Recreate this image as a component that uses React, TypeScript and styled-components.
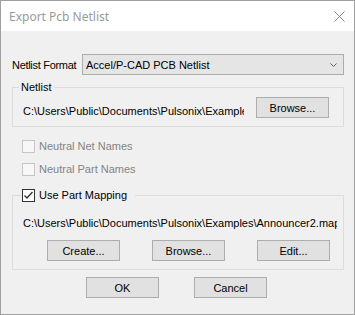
import React from "react"
import styled, { createGlobalStyle } from 'styled-components'

const GlobalStyle = createGlobalStyle`
    html, body {
        margin: 0;
        padding: 0;
        background: #ffffff;
    }

    body {
        font-family: "Liberation Sans", Arial, sans-serif;
        font-size: 11px;
        color: #000000;
    }
`

function CheckBox(props: { checked?: boolean, disabled?: boolean, label: string }): JSX.Element {
    return (
        <CheckRowSCP disabled={props.disabled}>
            <BoxSCP disabled={props.disabled}>
                {props.checked && (
                    <svg width="11" height="11" viewBox="0 0 11 11">
                        <polyline points="1.5,5.5 4,8 9.5,2" fill="none" stroke="#333333" strokeWidth="1.4" />
                    </svg>
                )}
            </BoxSCP>
            <span>{props.label}</span>
        </CheckRowSCP>
    )
}

function App(): JSX.Element {
    return (
        <>
            <GlobalStyle />
            <WindowSCP>
                <TitleBarSCP>
                    <span>Export Pcb Netlist</span>
                    <CloseSCP>
                        <svg width="11" height="11" viewBox="0 0 11 11">
                            <path d="M0.5,0.5 L10.5,10.5 M10.5,0.5 L0.5,10.5" stroke="#8a8a8a" strokeWidth="1" />
                        </svg>
                    </CloseSCP>
                </TitleBarSCP>

                <BodySCP>
                    <FormatRowSCP>
                        <LabelSCP>Netlist Format</LabelSCP>
                        <ComboSCP>
                            <span>Accel/P-CAD PCB Netlist</span>
                            <svg width="7" height="4" viewBox="0 0 7 4">
                                <polyline points="0.5,0.5 3.5,3.5 6.5,0.5" fill="none" stroke="#606060" strokeWidth="1" />
                            </svg>
                        </ComboSCP>
                    </FormatRowSCP>

                    <GroupSCP>
                        <LegendSCP>Netlist</LegendSCP>
                        <NetlistContentSCP>
                            <PathSCP>C:\Users\Public\Documents\Pulsonix\Examples\Announcer2.net</PathSCP>
                            <ButtonSCP>Browse...</ButtonSCP>
                        </NetlistContentSCP>
                    </GroupSCP>

                    <OptionSCP>
                        <CheckBox disabled label="Neutral Net Names" />
                    </OptionSCP>
                    <OptionSCP second>
                        <CheckBox disabled label="Neutral Part Names" />
                    </OptionSCP>

                    <GroupSCP spaced>
                        <CheckLegendSCP>
                            <CheckBox checked label="Use Part Mapping" />
                        </CheckLegendSCP>
                        <MappingContentSCP>
                            <PathSCP>C:\Users\Public\Documents\Pulsonix\Examples\Announcer2.map</PathSCP>
                            <ButtonRowSCP>
                                <ButtonSCP>Create...</ButtonSCP>
                                <ButtonSCP>Browse...</ButtonSCP>
                                <ButtonSCP>Edit...</ButtonSCP>
                            </ButtonRowSCP>
                        </MappingContentSCP>
                    </GroupSCP>

                    <FooterSCP>
                        <ButtonSCP>OK</ButtonSCP>
                        <ButtonSCP>Cancel</ButtonSCP>
                    </FooterSCP>
                </BodySCP>
            </WindowSCP>
        </>
    )
}

export default App

const WindowSCP = styled.div`
    width: 355px;
    height: 315px;
    box-sizing: border-box;
    border: 1px solid #a0a0a0;
    display: flex;
    flex-direction: column;
    overflow: hidden;
`

const TitleBarSCP = styled.div`
    height: 30px;
    flex-shrink: 0;
    background: #ffffff;
    display: flex;
    align-items: center;
    padding: 0 9px 0 8px;

    font-family: "Noto Sans", "Open Sans", sans-serif;
    font-size: 12px;
    color: #9a9a9a;
`

const CloseSCP = styled.div`
    margin-left: auto;
    display: flex;
`

const BodySCP = styled.div`
    flex: 1;
    background: #f0f0f0;
    padding: 23px 10px 0 11px;
    display: flex;
    flex-direction: column;
`

const FormatRowSCP = styled.div`
    display: flex;
    align-items: center;
    height: 21px;
`

const LabelSCP = styled.span`
    width: 70px;
    flex-shrink: 0;
    white-space: nowrap;
    letter-spacing: -0.3px;
`

const ComboSCP = styled.div`
    width: 262px;
    height: 21px;
    box-sizing: border-box;
    border: 1px solid #adadad;
    background: #e5e5e5;
    padding: 0 6px 0 3px;
    display: flex;
    align-items: center;
    justify-content: space-between;
`

const GroupSCP = styled.fieldset<{ spaced?: boolean }>`
    margin: ${p => p.spaced ? '13px' : '6px'} 0 0;
    padding: 0;
    border: 1px solid #dcdcdc;
    min-width: 0;
`

const LegendSCP = styled.legend`
    margin-left: 6px;
    padding: 0 2px;
    height: 13px;
    line-height: 13px;
`

const CheckLegendSCP = styled.legend`
    margin-left: 8px;
    padding: 0 8px 0 1px;
    height: 13px;
`

const NetlistContentSCP = styled.div`
    padding: 3px 14px 8px 10px;
    display: flex;
    align-items: flex-end;
    gap: 12px;
`

const MappingContentSCP = styled.div`
    padding: 15px 6px 8px 10px;
    display: flex;
    flex-direction: column;
`

const PathSCP = styled.div`
    flex: 1;
    min-width: 0;
    overflow: hidden;
    white-space: nowrap;
    line-height: 13px;
`

const ButtonSCP = styled.button`
    width: 73px;
    height: 21px;
    flex-shrink: 0;
    box-sizing: border-box;
    border: 1px solid #adadad;
    background: #e1e1e1;
    padding: 0;
    font: inherit;
    color: #000000;
`

const ButtonRowSCP = styled.div`
    display: flex;
    gap: 32px;
    margin-top: 10px;
    padding-left: 24px;
`

const OptionSCP = styled.div<{ second?: boolean }>`
    margin: ${p => p.second ? '10px' : '13px'} 0 0 10px;
`

const CheckRowSCP = styled.div<{ disabled?: boolean }>`
    display: flex;
    align-items: center;
    height: 13px;
    line-height: 13px;
    gap: 4px;
    color: ${p => p.disabled ? '#838383' : '#000000'};
`

const BoxSCP = styled.span<{ disabled?: boolean }>`
    width: 13px;
    height: 13px;
    box-sizing: border-box;
    border: 1px solid ${p => p.disabled ? '#c6c6c6' : '#333333'};
    background: ${p => p.disabled ? '#f7f7f7' : '#ffffff'};
    display: flex;
    align-items: center;
    justify-content: center;
`

const FooterSCP = styled.div`
    display: flex;
    justify-content: center;
    gap: 35px;
    margin-top: 7px;
    padding-right: 3px;
`
